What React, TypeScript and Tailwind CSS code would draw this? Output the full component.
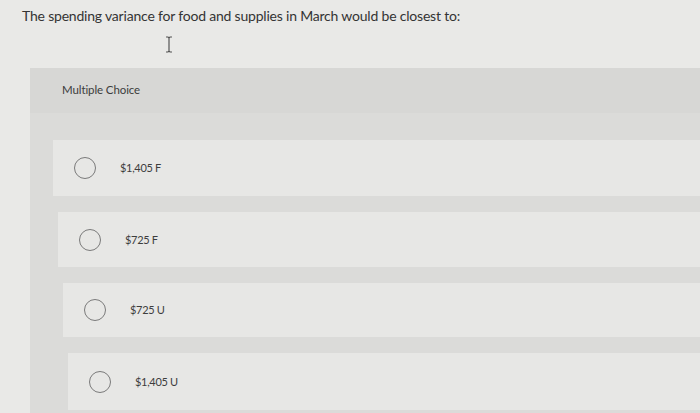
export default function App() {
  const options = [
    { label: "$1,405 F", row: "ml-[23px] h-[56px]" },
    { label: "$725 F", row: "ml-[28px] h-[55px]" },
    { label: "$725 U", row: "ml-[33px] h-[54px]" },
    { label: "$1,405 U", row: "ml-[38px] h-[57px]" },
  ]

  return (
    <div className="w-[700px] h-[413px] overflow-hidden bg-[#e9e9e7] font-['Lato',sans-serif] text-[#343434]">
      <h1 className="pl-[22px] pt-[6px] text-[14px] leading-[20px] tracking-[-0.2px]">
        The spending variance for food and supplies in March would be closest to:
      </h1>
      <div className="h-[42px] pl-[164px] pt-[10px]">
        <svg width="10" height="17" viewBox="0 0 10 17" fill="none" stroke="#555" strokeWidth="1.2">
          <path d="M2 1h2l1 1 1-1h2M5 2v13M2 16h2l1-1 1 1h2" />
        </svg>
      </div>
      <div className="ml-[30px] bg-[#dbdbd9]">
        <div className="h-[45px] bg-[#d7d7d5] pl-[32px] pt-[14px] text-[11.5px] leading-[16px] tracking-[-0.1px] text-[#3c3c3c]">
          Multiple Choice
        </div>
        <div className="flex flex-col gap-[16px] pt-[27px] pb-[4px]">
          {options.map((o) => (
            <div key={o.label} className={`${o.row} flex items-center bg-[#e7e7e5]`}>
              <span className="ml-[21px] h-[22px] w-[22px] rounded-full border-[1.5px] border-[#7a7a7a]" />
              <span className="ml-[24px] text-[11px] leading-[16px] tracking-[-0.3px] text-[#3d3d3d]">
                {o.label}
              </span>
            </div>
          ))}
        </div>
      </div>
    </div>
  )
}
